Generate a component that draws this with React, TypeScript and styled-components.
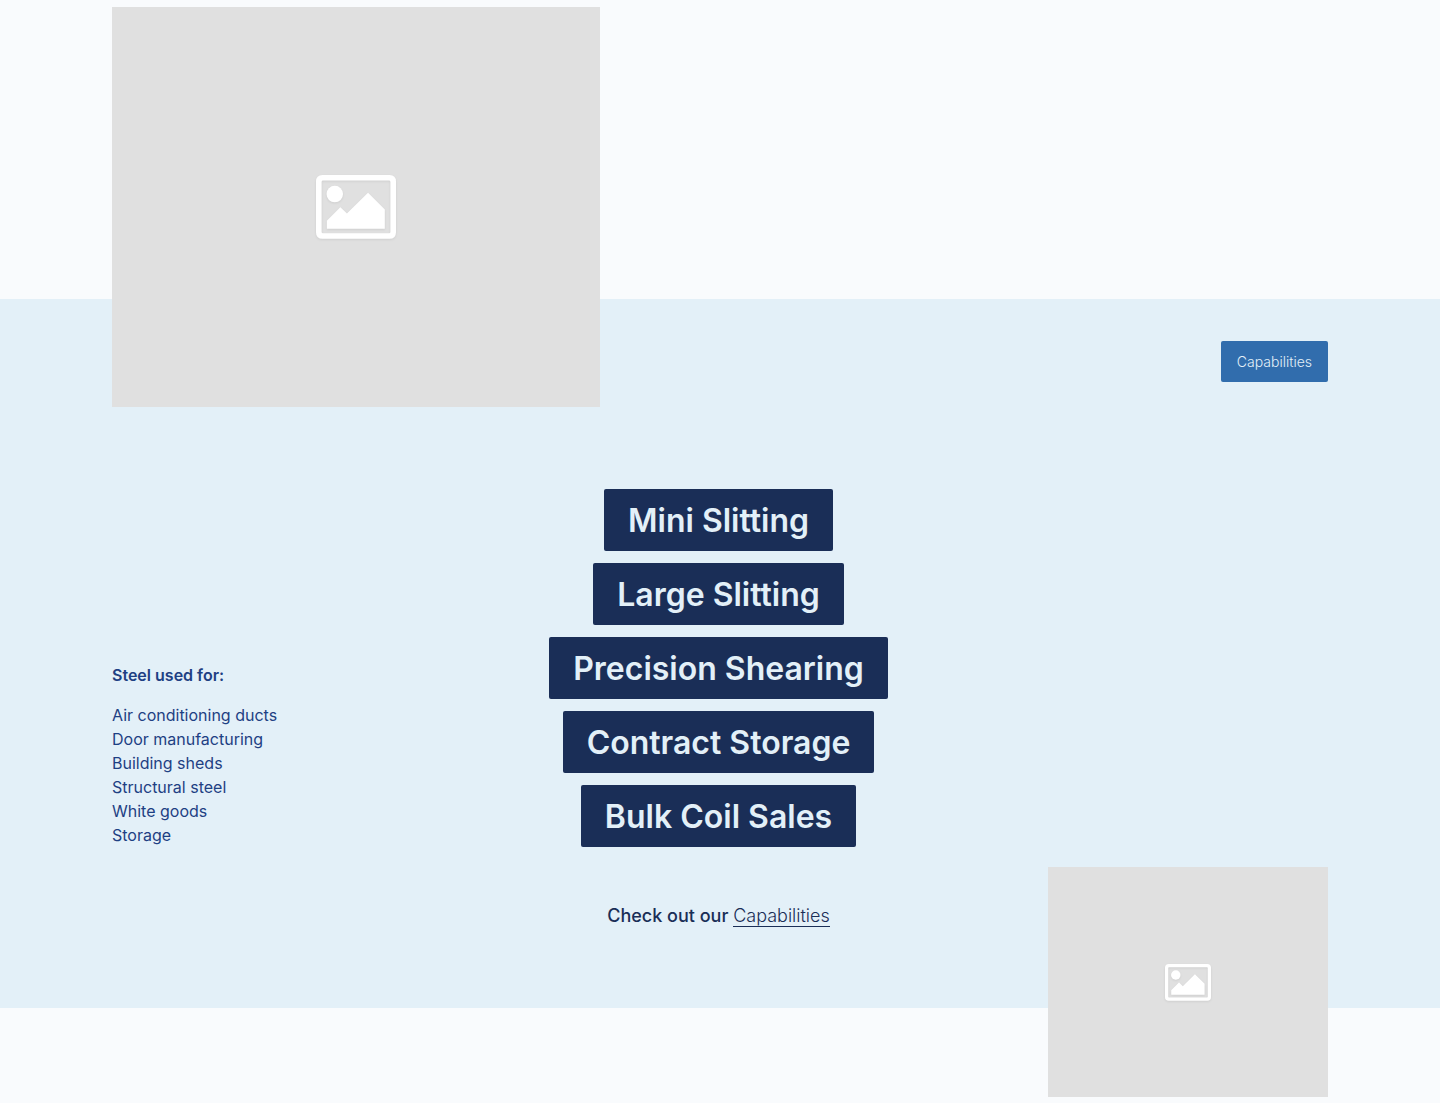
import React from "react";
import styled, { createGlobalStyle } from "styled-components";

const GlobalStyle = createGlobalStyle`
  *, *::before, *::after { box-sizing: border-box; }
  body {
    margin: 0;
    background: #f9fbfd;
    color: #1a2e57;
    font-family: Inter, "Liberation Sans", sans-serif;
    font-variant-ligatures: none;
    font-size: 16px;
    line-height: 24px;
  }
`;

const Page = styled.main`
  padding: 299px 0 95px;
`;

const Band = styled.section`
  background: #e3f0f8;
  padding: 0 112px;
`;

const Intro = styled.div`
  display: flex;
  justify-content: space-between;
  align-items: flex-start;
`;

const Placeholder = styled.div<{ $large?: boolean }>`
  display: flex;
  align-items: center;
  justify-content: center;
  background: #e0e0e0;
  width: ${(p) => (p.$large ? "488px" : "280px")};
  height: ${(p) => (p.$large ? "400px" : "230px")};
  margin-top: ${(p) => (p.$large ? "-292px" : "0")};
  margin-bottom: ${(p) => (p.$large ? "0" : "-89px")};

  svg {
    width: ${(p) => (p.$large ? "80px" : "46px")};
    overflow: visible;
    filter: drop-shadow(0 1px 1px rgba(0, 0, 0, 0.08));
  }
`;

const ButtonLink = styled.a`
  margin-top: 42px;
  padding: 10px 16px;
  border-radius: 2px;
  background: #316dad;
  color: #e3f0f8;
  font-size: 14px;
  font-weight: 300;
  line-height: 21px;
  text-decoration: none;
`;

const Columns = styled.div`
  display: grid;
  grid-template-columns: 277px 1fr 280px;
  row-gap: 20px;
  padding-top: 82px;
`;

const Uses = styled.div`
  align-self: end;
  color: #1e4083;
`;

const UsesTitle = styled.h2`
  margin: 0 0 16px;
  font-size: 16px;
  font-weight: 600;
`;

const UsesList = styled.ul`
  margin: 0;
  padding: 0;
  list-style: none;
`;

const Services = styled.ul`
  grid-column: 2;
  display: flex;
  flex-direction: column;
  align-items: center;
  gap: 12px;
  margin: 0;
  padding: 0;
  list-style: none;
`;

const Service = styled.li`
  padding: 8px 24px 6px;
  border-radius: 2px;
  background: #1a2e57;
  color: #e3f0f8;
  font-size: 32px;
  font-weight: 600;
  line-height: 48px;
`;

const Prompt = styled.p`
  grid-column: 2;
  margin: 0;
  padding-top: 37px;
  text-align: center;
  font-size: 18px;
  font-weight: 500;
`;

const TextLink = styled.a`
  border-bottom: 1px solid currentColor;
  color: inherit;
  font-weight: 300;
  text-decoration: none;
`;

const uses = [
  "Air conditioning ducts",
  "Door manufacturing",
  "Building sheds",
  "Structural steel",
  "White goods",
  "Storage",
];

const services = [
  "Mini Slitting",
  "Large Slitting",
  "Precision Shearing",
  "Contract Storage",
  "Bulk Coil Sales",
];

function ImagePlaceholder({ large }: { large?: boolean }) {
  return (
    <Placeholder $large={large}>
      <svg viewBox="0 0 243 194" fill="#fff" aria-hidden="true">
        <path
          fillRule="evenodd"
          d="M20 0H223Q243 0 243 20V174Q243 194 223 194H20Q0 194 0 174V20Q0 0 20 0ZM21 17Q17 17 17 21V173Q17 177 21 177H222Q226 177 226 173V21Q226 17 222 17Z"
        />
        <circle cx="57" cy="58" r="25" />
        <path d="M33 139L74 98L94 117L158 54L209 105V163H33Z" />
      </svg>
    </Placeholder>
  );
}

export default function App() {
  return (
    <>
      <GlobalStyle />
      <Page>
        <Band>
          <Intro>
            <ImagePlaceholder large />
            <ButtonLink href="#capabilities">Capabilities</ButtonLink>
          </Intro>
          <Columns id="capabilities">
            <Uses>
              <UsesTitle>Steel used for:</UsesTitle>
              <UsesList>
                {uses.map((use) => (
                  <li key={use}>{use}</li>
                ))}
              </UsesList>
            </Uses>
            <Services>
              {services.map((service) => (
                <Service key={service}>{service}</Service>
              ))}
            </Services>
            <Prompt>
              Check out our <TextLink href="#capabilities">Capabilities</TextLink>
            </Prompt>
            <ImagePlaceholder />
          </Columns>
        </Band>
      </Page>
    </>
  );
}
